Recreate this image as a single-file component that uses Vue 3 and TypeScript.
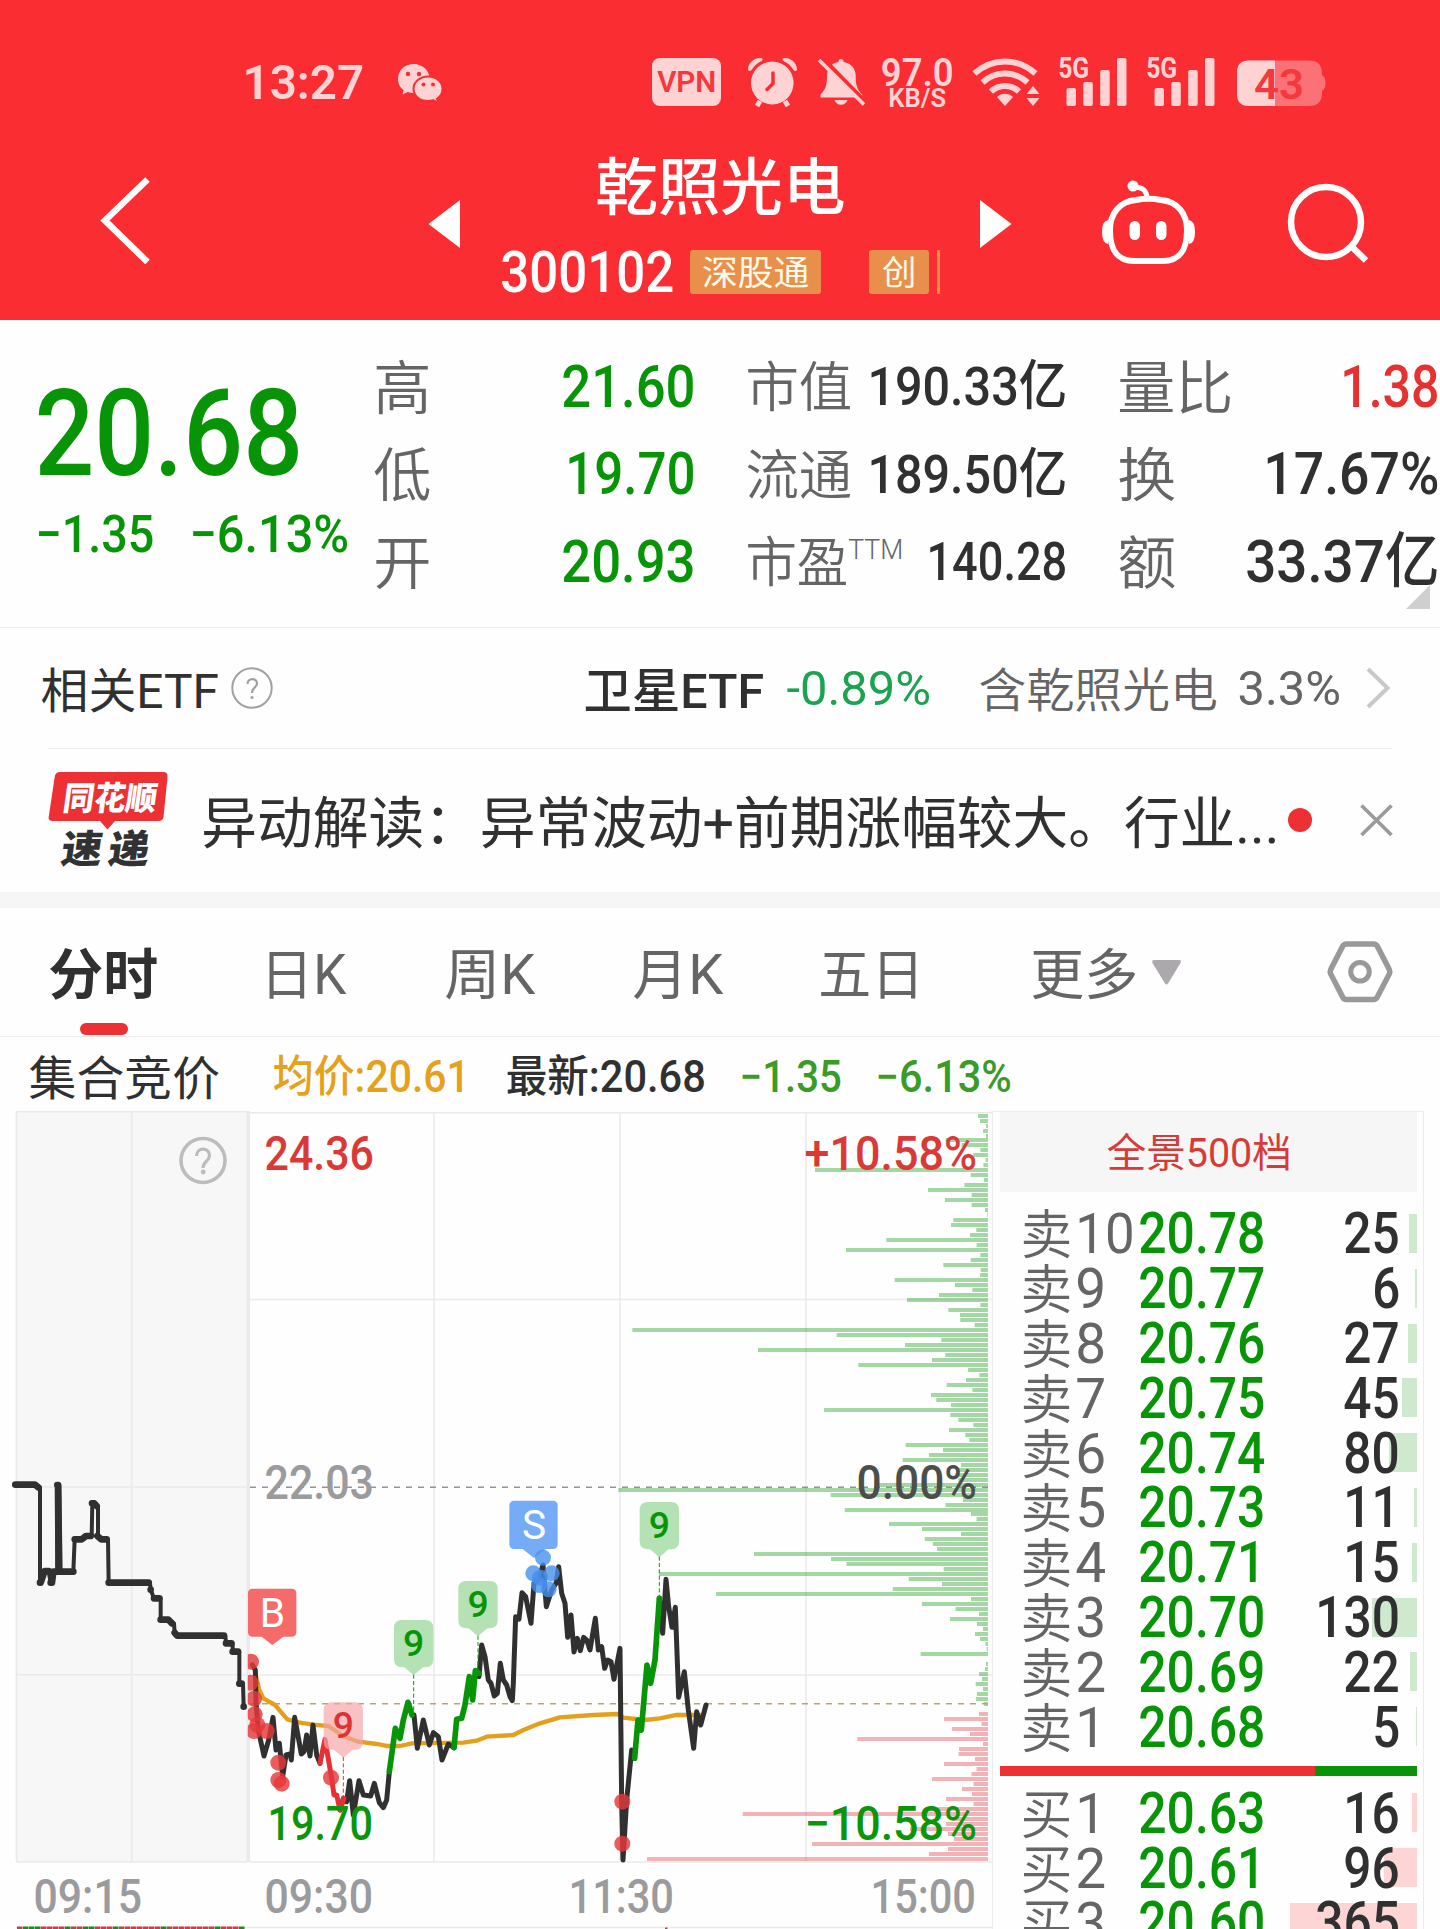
<script setup lang="ts">
import { h, type FunctionalComponent } from 'vue'

interface FitProps {
  t: string
  w: number
  s: number
  h?: number
  wt?: number
}

// A single line of text set to an exact measure.
const Fit: FunctionalComponent<FitProps> = (p) => {
  const height = p.h ?? Math.round(p.s * 1.1)
  const left = p.s * 0.03
  const right = p.s * 0.042
  const drop = /[\u4e00-\u9fff]/.test(p.t) && !/\d/.test(p.t) ? p.s * 0.042 : 0
  return h('svg', { width: p.w, height, class: 'fit' }, [
    h('text', {
      x: -left,
      y: height / 2 + p.s * 0.355 + drop,
      textLength: p.w + left + right,
      lengthAdjust: 'spacingAndGlyphs',
      'font-size': p.s,
      'font-weight': p.wt ?? 500,
    }, p.t),
  ])
}
Fit.props = ['t', 'w', 's', 'h', 'wt']

interface Stat {
  label: string
  lw: number
  ls: number
  value: string
  vw: number
  vs: number
  tone: string
  sup?: string
}
const stats: Stat[][] = [
  [
    { label: '高', lw: 54, ls: 58, value: '21.60', vw: 130, vs: 60, tone: 'green' },
    { label: '低', lw: 54, ls: 58, value: '19.70', vw: 126, vs: 60, tone: 'green' },
    { label: '开', lw: 54, ls: 58, value: '20.93', vw: 130, vs: 60, tone: 'green' },
  ],
  [
    { label: '市值', lw: 103, ls: 54, value: '190.33亿', vw: 196, vs: 54, tone: 'dark' },
    { label: '流通', lw: 103, ls: 54, value: '189.50亿', vw: 196, vs: 54, tone: 'dark' },
    { label: '市盈', lw: 99, ls: 54, value: '140.28', vw: 137, vs: 53, tone: 'dark', sup: 'TTM' },
  ],
  [
    { label: '量比', lw: 112, ls: 58, value: '1.38', vw: 95, vs: 60, tone: 'red' },
    { label: '换', lw: 55, ls: 58, value: '17.67%', vw: 172, vs: 60, tone: 'dark' },
    { label: '额', lw: 55, ls: 58, value: '33.37亿', vw: 190, vs: 60, tone: 'dark' },
  ],
]

const tabs = [
  { t: '分时', w: 106, wt: 700 },
  { t: '日K', w: 82, wt: 400 },
  { t: '周K', w: 87, wt: 400 },
  { t: '月K', w: 87, wt: 400 },
  { t: '五日', w: 102, wt: 400 },
  { t: '更多', w: 104, wt: 400 },
]

interface Level {
  side: string
  n: number
  price: string
  qty: number
  bar: number
}
const sells: Level[] = [
  { side: '卖', n: 10, price: '20.78', qty: 25, bar: 8 },
  { side: '卖', n: 9, price: '20.77', qty: 6, bar: 2 },
  { side: '卖', n: 8, price: '20.76', qty: 27, bar: 9 },
  { side: '卖', n: 7, price: '20.75', qty: 45, bar: 15 },
  { side: '卖', n: 6, price: '20.74', qty: 80, bar: 28 },
  { side: '卖', n: 5, price: '20.73', qty: 11, bar: 3 },
  { side: '卖', n: 4, price: '20.71', qty: 15, bar: 5 },
  { side: '卖', n: 3, price: '20.70', qty: 130, bar: 45 },
  { side: '卖', n: 2, price: '20.69', qty: 22, bar: 7 },
  { side: '卖', n: 1, price: '20.68', qty: 5, bar: 1 },
]
const buys: Level[] = [
  { side: '买', n: 1, price: '20.63', qty: 16, bar: 5 },
  { side: '买', n: 2, price: '20.61', qty: 96, bar: 33 },
  { side: '买', n: 3, price: '20.60', qty: 365, bar: 127 },
]
const digitWidth = (n: number): number => String(n).length * 28.4 - 4.5

// Left edge of every price-volume bar, top of the chart to the bottom.
const upper = [
  1134, 1140, 1158, 1149, 1158, 1037, 1085, 1141, 1120, 1157, 1150, 645, 1112, 1152, 1093, 984, 1115, 1035, 1115, 1155,
  1162, 1060, 1053, 1129, 1110, 859, 1130, 738, 1141, 1112, 1030, 1142, 1140, 884, 1065, 1117, 1017, 921, 1141, 1045,
  1080, 1081, 1124, 97, 710, 1024, 915, 474, 1036, 996, 775, 1104, 1138, 1098, 1040, 1117, 993, 1009, 1053, 672,
  1051, 1075, 1120, 1047, 1096, 1108, 917, 1029, 987, 908, 1083, 1070, 1065, 1075, 833, 55, 692,
].map((v) => 600 + v / 3)
const lower = [
  963, 945.4, 844.8, 971, 976.6, 889, 922, 961, 924.8, 932.8, 937, 754, 831, 846.5, 943.7, 659, 908.8, 942, 892.8, 716,
  971, 921.8, 955.5, 979, 950, 977, 983, 975, 980, 985.5, 986.7, 920.6, 988, 986, 985, 979, 982, 975.7, 983, 977, 976,
  984, 988, 979, 944, 981.6, 952, 970, 857.4, 983, 959, 958.5, 975, 944, 976.5, 971.5, 932, 973.6, 962, 972, 946,
  973.6, 938, 742.7, 952, 946, 910, 948, 954, 812, 948, 929, 647,
]
const bars = [...upper, ...lower].map((x, i) => ({
  x,
  w: 988 - x,
  y: (i < 5 ? 1114 : i < 80 ? 1113 : 1112) + 5 * i,
  fill: i < 119 ? 'rgba(8,150,12,.37)' : 'rgba(226,50,56,.37)',
}))

const nines = [
  { x: 1241, y: 510, to: 795, c: 'g' },
  { x: 1434, y: 393, to: 660, c: 'g' },
  { x: 1978, y: 156, to: 445, c: 'g' },
  { x: 1030, y: 757, to: 1045, c: 'r' },
]
const redDots = [
  [753, 635], [752, 698], [762, 746], [764, 793], [772, 825], [762, 843], [800, 843],
  [835, 938], [835, 990], [845, 1001], [993, 983], [1867, 1055], [1867, 1181],
]
const blueDots = [[1629, 323], [1600, 370], [1620, 383], [1655, 370], [1617, 405], [1646, 418]]

const labels = [
  { t: '24.36', x: 266, w: 106, y: 1170, c: '#d93a37' },
  { t: '22.03', x: 266, w: 106, y: 1499, c: '#9b9a9c' },
  { t: '19.70', x: 269, w: 102, y: 1840, c: '#0a960a' },
  { t: '+10.58%', x: 806, w: 169, y: 1170, c: '#d93a37' },
  { t: '0.00%', x: 858, w: 117, y: 1499, c: '#4b4e4a' },
  { t: '−10.58%', x: 806, w: 169, y: 1840, c: '#0a960a' },
  { t: '09:15', x: 35, w: 105, y: 1913, c: '#9b9a9c' },
  { t: '09:30', x: 266, w: 105, y: 1913, c: '#9b9a9c' },
  { t: '11:30', x: 570, w: 102, y: 1913, c: '#9b9a9c' },
  { t: '15:00', x: 872, w: 102, y: 1913, c: '#9b9a9c' },
]
const ticks = Array.from({ length: 38 }, (_, i) => ({
  x: 17 + i * 6,
  c: [1, 2, 3, 8, 11, 12, 16, 24, 33, 37].includes(i) ? '#0a960a' : '#d9383a',
}))
</script>

<template>
  <div class="screen">
    <header class="head">
      <div class="status">
        <Fit t="13:27" :w="118" :s="49" :wt="600" />
        <svg width="46" height="60" viewBox="397 52 46 60">
          <path d="M413.500 64c-9 0-15.500 6.500-15.500 15 0 5 2.300 8.500 5.500 11l-1 4.500 5-2.500c2 .7 4 1 6 1 9 0 16-6.500 16-14.500s-7-14.500-16-14.500z" fill="#ffd3d4" />
          <path d="M428 76.500c-8 0-14.500 5.500-14.500 12.300s6 12.200 14.500 12.200c2 0 3.500-.3 5-.8l5.500 2.600-1.500-4c3.500-2.300 5.500-6 5.500-10 0-7-6.500-12.300-14.500-12.300z" fill="#ffd3d4" stroke="#f92d32" stroke-width="2" />
          <g fill="#f92d32"><circle cx="408" cy="74" r="2.200" /><circle cx="419" cy="74" r="2.200" /><circle cx="423.500" cy="84.500" r="2" /><circle cx="433" cy="84.500" r="2" /></g>
        </svg>
        <div class="vpn"><Fit t="VPN" :w="57" :s="29" :wt="600" /></div>
        <svg width="52" height="60" viewBox="746 52 52 60" fill="#ffd3d4">
          <ellipse cx="772.300" cy="83" rx="21.300" ry="21.500" />
          <path d="M748 69.500c0-7 7-12.500 13-11.500 2 .5 2 2 .5 3-4.500 2-7.500 5-10 9-1.500 1.500-3.500 1-3.500-.5zM797 69.500c0-7-7-12.500-13-11.500-2 .5-2 2-.5 3 4.500 2 7.500 5 10 9 1.500 1.500 3.500 1 3.500-.5z" />
          <path d="M760 101l-3 5M785 101l3 5" stroke="#ffd3d4" stroke-width="5" />
          <path d="M773 73v10.500l-6 6" fill="none" stroke="#f92d32" stroke-width="3.500" stroke-linecap="round" />
        </svg>
        <svg width="52" height="60" viewBox="816 52 52 60" fill="#ffd3d4">
          <path d="M841 59c2 0 2.500 1.500 2.700 3 8 1.500 12 7 12 14.500 0 9 1.500 13 6.500 18v3H820.500v-3c5-5 6.500-9 6.500-18 0-7.500 3.500-13 11.300-14.500.2-1.500.7-3 2.700-3zM834.500 100h13c-1 3-3.500 4.700-6.500 4.700s-5.500-1.700-6.500-4.700z" />
          <path d="M822 57.500l45 46" stroke="#f92d32" stroke-width="4" />
          <path d="M819 60l45 44.500" stroke="#ffd3d4" stroke-width="3.600" />
        </svg>
        <div class="rate">
          <Fit t="97.0" :w="70" :s="38" :h="30" :wt="600" />
          <Fit t="KB/S" :w="56" :s="25" :h="20" :wt="600" />
        </div>
        <svg width="70" height="60" viewBox="971 52 70 60" fill="none" stroke="#ffd3d4" stroke-width="6">
          <path d="M974.500 73.500c18-16 43-16 61 0" /><path d="M982.500 82.500c13-12 32-12 45 0" /><path d="M991 91.500c8-7.500 20-7.500 28 0" />
          <path d="M997 97c4-4.500 12-4.500 16 0l-8 9z" fill="#ffd3d4" stroke="none" />
          <path d="M1026.500 94l6.500-8 6.500 8zM1026.500 98h13l-6.500 8z" fill="#ffd3d4" stroke="none" />
        </svg>
        <div v-for="n in 2" :key="n" class="signal">
          <Fit t="5G" :w="29" :s="29" :h="22" :wt="700" />
          <svg width="61" height="50" viewBox="1066 57 61 50" fill="#ffd3d4" class="sigbars">
            <rect x="1066.500" y="88" width="9.500" height="18" rx="2" /><rect x="1083.300" y="82" width="9.500" height="24" rx="2" />
            <rect x="1100.200" y="70" width="9.500" height="36" rx="2" /><rect x="1117" y="58" width="9.500" height="48" rx="2" />
          </svg>
        </div>
        <svg width="90" height="60" viewBox="1237 52 90 60">
          <path d="M1249 60.500h60q13 0 13 13v1.500q3.500 2 3.500 8t-3.500 8v2q0 13-13 13h-60q-12 0-12-12v-21.500q0-12 12-12z" fill="#fb7175" />
          <path d="M1275 60.500h-26q-12 0-12 12v21.500q0 12 12 12h26z" fill="#ffd3d4" />
          <text x="1254" y="99" font-size="43" font-weight="600" textLength="50" lengthAdjust="spacingAndGlyphs" fill="#f4383d">43</text>
        </svg>
      </div>
      <div class="nav">
        <svg width="327" height="208" viewBox="101 112 327 208"><path d="M147.500 179.500L105 220.500l42.500 41.500" fill="none" stroke="#fff" stroke-width="6.500" /></svg>
        <svg width="74" height="208" viewBox="428 112 74 208"><path d="M428.500 224L460 200v48z" fill="#fff" /></svg>
        <div class="name">
          <Fit t="乾照光电" :w="246" :s="62" :h="67" :wt="500" class="title" />
          <div class="code">
            <Fit t="300102" :w="170" :s="57" :h="44" :wt="500" />
            <span class="badge wide"><Fit t="深股通" :w="105" :s="34" :h="44" :wt="400" /></span>
            <span class="badge"><Fit t="创" :w="32" :s="34" :h="44" :wt="400" /></span>
            <i class="sliver" />
          </div>
        </div>
        <svg width="122" height="208" viewBox="980 112 122 208"><path d="M1011.500 224L980 200v48z" fill="#fff" /></svg>
        <svg width="185" height="208" viewBox="1102 112 185 208" fill="none" stroke="#fff" stroke-width="6">
          <path d="M1136 200c8-1.500 17-1.500 25 0 17 1.500 26 14 26 30 0 22-8 31-25 31h-27c-17 0-25-9-25-31 0-16 9-28.500 26-30z" />
          <path d="M1147 199c0-7-3-12-13-12" stroke-width="5" /><circle cx="1133" cy="186" r="5.500" fill="#fff" stroke="none" />
          <path d="M1108 220q-6 1-6 12t6 12zM1189 220q6 1 6 12t-6 12z" fill="#fff" stroke="none" />
          <g fill="#fff" stroke="none"><rect x="1129.500" y="221" width="10.500" height="19" rx="5.200" /><rect x="1156" y="221" width="10.500" height="19" rx="5.200" /></g>
        </svg>
        <svg width="90" height="208" viewBox="1287 112 90 208" fill="none" stroke="#fff" stroke-width="6.500"><circle cx="1326" cy="222" r="35" /><path d="M1351.500 246.500l14.500 14" /></svg>
      </div>
    </header>

    <section class="quote">
      <div class="last">
        <Fit t="20.68" :w="260" :s="120" :h="120" :wt="500" class="green" />
        <div class="chg">
          <Fit t="−1.35" :w="115" :s="52" :h="60" class="green" />
          <Fit t="−6.13%" :w="156" :s="52" :h="60" class="green" />
        </div>
      </div>
      <div v-for="(col, c) in stats" :key="c" class="statcol">
        <div v-for="r in col" :key="r.label" class="stat">
          <span class="lab"><Fit :t="r.label" :w="r.lw" :s="r.ls" :wt="350" class="grey" /><Fit v-if="r.sup" :t="r.sup" :w="53" :s="28" :wt="300" class="grey sup" /></span>
          <Fit :t="r.value" :w="r.vw" :s="r.vs" :class="r.tone" />
        </div>
      </div>
      <svg class="corner" width="24" height="24"><path d="M24 0v24H0z" fill="#cfcfcf" /></svg>
    </section>

    <section class="etf">
      <Fit t="相关ETF" :w="175" :s="48" :wt="400" class="dark" />
      <svg width="42" height="42" fill="none" stroke="#a0a0a0"><circle cx="21" cy="21" r="19.700" stroke-width="2" /><path d="M16.500 17c0-6.500 9.500-6.500 9.500-.5 0 4-5 4-5 9.500" stroke-width="2.200" /><circle cx="21" cy="30.500" r="1.600" fill="#a0a0a0" stroke="none" /></svg>
      <Fit t="卫星ETF" :w="177" :s="48" :wt="500" class="dark" />
      <Fit t="-0.89%" :w="141" :s="49" :wt="400" class="mint" />
      <Fit t="含乾照光电" :w="236" :s="47" :wt="350" class="grey" />
      <Fit t="3.3%" :w="100" :s="49" :wt="400" class="grey" />
      <svg width="26" height="44" fill="none"><path d="M2 3l19.500 19L2 41" stroke="#c9c9c9" stroke-width="4" /></svg>
    </section>

    <section class="news">
      <svg width="154" height="143" viewBox="49 749 154 143">
        <path d="M60 772h103q5 0 4.500 5l-4 40q-.6 4-5 4H115l-7.500 8.500L100 821H53q-5 0-4.300-4l6-40q.7-5 5.300-5z" fill="#ed3033" />
        <g font-weight="900" transform="skewX(-8)"><text x="175.500" y="810" font-size="33" textLength="94" lengthAdjust="spacingAndGlyphs" fill="#fff">同花顺</text>
          <text x="181" y="863.500" font-size="39" textLength="41" lengthAdjust="spacingAndGlyphs" fill="#323232">速</text>
          <text x="228" y="863.500" font-size="39" textLength="41" lengthAdjust="spacingAndGlyphs" fill="#323232">递</text></g>
      </svg>
      <Fit t="异动解读：异常波动+前期涨幅较大。行业..." :w="1074" :s="56" :wt="400" class="dark headline" />
      <svg width="117" height="143" viewBox="1275 749 117 143"><circle cx="1300" cy="820" r="12" fill="#ed3033" /><path d="M1361.500 805.500l30 29.500M1391.500 805.500l-30 29.500" stroke="#9a9a9a" stroke-width="3.600" /></svg>
    </section>
    <div class="band" />

    <nav class="tabs">
      <div v-for="(t, i) in tabs" :key="t.t" class="tab" :class="{ on: i === 0 }">
        <Fit :t="t.t" :w="t.w" :s="55" :h="64" :wt="t.wt" :class="i ? 'grey' : 'dark'" />
        <svg v-if="i === 5" class="caret" width="29" height="25"><path d="M2 0h25q3 0 1.500 3L16 23.500q-1.500 2-3 0L.5 3Q-.5 0 2 0z" fill="#aba9ab" /></svg>
      </div>
      <svg width="66" height="66" viewBox="1327 939 66 66" fill="none" stroke="#999" stroke-width="5.500"><path d="M1346.500 944h27q2.500 0 3.800 2.200l12 23.300q1 2.200 0 4.400l-12 23.200q-1.300 2.400-3.800 2.400h-27q-2.500 0-3.800-2.400l-12-23.200q-1-2.200 0-4.400l12-23.300q1.300-2.200 3.800-2.200z" /><circle cx="1360" cy="971.800" r="9.300" stroke-width="5" /></svg>
    </nav>

    <div class="info">
      <Fit t="集合竞价" :w="188" :s="47" :wt="400" class="dark" />
      <Fit t="均价:20.61" :w="194" :s="44" class="gold" />
      <Fit t="最新:20.68" :w="197" :s="44" class="dark" />
      <Fit t="−1.35" :w="99" :s="44" class="leaf" />
      <Fit t="−6.13%" :w="133" :s="44" class="leaf" />
    </div>

    <main class="market">
      <svg class="chart" width="992" height="818" viewBox="0 1111 992 818">
        <rect x="16.500" y="1111" width="232" height="751" fill="#f7f7f7" />
        <g fill="none" stroke="#ece9eb" stroke-width="1.600">
          <path d="M16.500 1862V1111.700H249M131.700 1111V1862M16.500 1487H247M16.500 1674.700H247M16.500 1862H247" />
          <path d="M248.300 1111V1862" stroke-width="3.500" />
          <path d="M250 1112.800H992M250 1299.500H992M250 1675H992M250 1862H992M434 1112V1862M620 1112V1862M806 1112V1862M16 1927.500H992" />
        </g>
        <rect v-for="(b, i) in bars" :key="i" :x="b.x" :y="b.y" :width="b.w" height="4" :fill="b.fill" />
        <path d="M250 1487.300H988" stroke="#949494" stroke-width="1.600" stroke-dasharray="6 6" />
        <path d="M250 1703.700H988" stroke="#b7a575" stroke-width="1.600" stroke-dasharray="6 6" />
        <g fill="none" stroke="#bcbcbc" stroke-width="3.600"><circle cx="203" cy="1160.500" r="22" /><path d="M196.500 1156c0-9 13-9 13-.5 0 6-6.500 6-6.500 12.500" stroke-width="3.200" /><circle cx="203.200" cy="1172" r="2.400" fill="#bcbcbc" stroke="none" /></g>

        <g transform="translate(0 1450) scale(.33333)" fill="none" stroke-linejoin="round" stroke-linecap="round">
          <g stroke="#303030">
            <path stroke-width="12" d="M46 104L105 104 120 112V398L134 363 146 365 152 398 160 365 172 363V104H178L182 365H220L224 268H245L258 258H275L277 160H283L294 170V258L304 268H324L326 398H450L452 419 462 445H482V509H505L522 520 524 548 532 557H676L678 580H698V605H718V701H729L731 770" />
            <path stroke-width="20" d="M46 104H105L115 112M120 398V398M122 398L134 363H146M152 398H156L160 365H220M172 105H174L176 360M224 268H245L258 258H272M276 160H283L290 168M292 258L304 268H320M326 398H446M452 419V419M462 445H478M482 509H505L516 520M524 548L532 557H672M678 580H694M698 605H714M718 701H725M731 770V770" />
          </g>
          <path stroke="#e2a01c" stroke-width="13" d="M765 665L778 720 790 745 825 765 862 808 900 818 940 824 985 828 1030 858 1075 875 1130 882 1160 888H1200L1235 880 1390 878 1430 872 1460 860 1540 855 1570 840 1620 820 1680 802 1780 795 1855 792 1870 803 1935 810 1980 805 2030 795H2100" />
          <path stroke="#303030" stroke-width="15" d="M757 645L766 660 768 760 775 840 792 918 806 870 819 802 828 900 838 880 848 980 858 915 870 912 874 930 884 802 904 912 912 905 920 855 930 918 939 825 950 915 960 940M1020 1080L1030 1045 1040 1055 1049 992 1060 1095 1077 992 1090 1035 1112 1038 1123 1000 1138 1058 1150 1073 1160 1050 1168 965M1242 795L1252 895 1270 810 1288 885 1300 848 1315 860 1326 930 1345 882 1362 893M1437 680L1445 585 1455 620 1465 690 1473 700 1483 738 1492 730 1501 640 1510 690 1520 705 1530 740 1537 752 1540 700 1547 500 1557 507 1566 428 1577 440 1593 520 1602 400 1615 390 1629 345 1639 470 1655 420 1668 400 1676 350 1685 430 1695 460 1703 562 1713 495 1722 606 1732 565 1741 602 1751 562 1760 570 1770 600 1786 505 1795 600 1805 590 1814 655 1823 630 1833 635 1842 688 1860 595 1865 1050 1869 1230 1880 1050 1895 900 1904 925M1978 445L1988 550 1998 388 2006 470 2016 532 2026 472 2036 742 2053 665 2065 780 2081 895 2090 785 2102 825 2118 765" />
          <path stroke="#e83034" stroke-width="15" d="M960 940L975 868 995 985 1002 1035 1010 1035 1020 1080 1032 1045" />
          <path stroke="#079507" stroke-width="17" d="M1168 965L1186 835 1200 865 1210 810 1224 757 1236 795M1362 893L1370 808 1385 805 1395 765 1408 680 1418 750 1426 662 1437 670M1904 925L1914 810 1924 840 1941 645 1952 700 1965 630 1978 445" />
        </g>
        <clipPath id="session"><rect x="247.800" y="1112" width="744" height="760" /></clipPath>
        <g clip-path="url(#session)">
          <g transform="translate(0 1450) scale(.33333)">
            <circle v-for="(d, i) in redDots" :key="'r' + i" :cx="d[0]" :cy="d[1]" r="24" fill="#e5383b" fill-opacity=".82" />
            <path d="M1565 295L1602 324 1640 295z" fill="#75acf5" />
            <circle v-for="(d, i) in blueDots" :key="'b' + i" :cx="d[0]" :cy="d[1]" r="24" fill="#4790ee" fill-opacity=".8" />
            <path d="M758 416H875Q889 416 889 430V546Q889 560 875 560H850L817 585 785 560H758Q744 560 744 546V430Q744 416 758 416z" fill="#f46b69" />
            <rect x="1528" y="152" width="145" height="145" rx="14" fill="#75acf5" />
            <text x="817" y="530" font-size="122" text-anchor="middle" fill="#fff">B</text>
            <text x="1602" y="267" font-size="122" text-anchor="middle" fill="#fff">S</text>
            <g v-for="(n, i) in nines" :key="'n' + i" :transform="`translate(${n.x} ${n.y})`">
              <path d="M-35 0H35Q59 0 59 24V118Q59 142 35 142H28L0 166-28 142H-35Q-59 142-59 118V24Q-59 0-35 0z" :fill="n.c === 'g' ? '#a8dda9' : '#f5a3a6'" :fill-opacity="n.c === 'g' ? .86 : .68" />
              <path :d="`M0 164V${n.to - n.y}`" :stroke="n.c === 'g' ? '#0a960a' : '#d9383a'" stroke-width="3" stroke-dasharray="12 7" />
              <text x="0" y="107" font-size="112" font-weight="500" text-anchor="middle" :fill="n.c === 'g' ? '#079507' : '#e03235'">9</text>
            </g>
          </g>
        </g>
        <text v-for="l in labels" :key="l.t + l.x" :x="l.x - 1.5" :y="l.y" :textLength="l.w + 3.500" lengthAdjust="spacingAndGlyphs" font-size="48" font-weight="500" :fill="l.c">{{ l.t }}</text>
        <rect v-for="t in ticks" :key="t.x" :x="t.x" y="1926.500" width="5.500" height="3" :fill="t.c" />
        <rect x="665" y="1927.500" width="2.500" height="2" fill="#d9383a" />
      </svg>

      <aside class="book">
        <div class="deep"><Fit t="全景500档" :w="182" :s="40" :wt="400" /></div>
        <div class="sells">
          <div v-for="l in sells" :key="l.n" class="level">
            <span class="side"><Fit :t="l.side" :w="48" :s="53" :h="54" :wt="350" class="grey" /><Fit :t="String(l.n)" :w="digitWidth(l.n) + 3" :s="56" :h="54" :wt="400" class="grey" /></span>
            <Fit :t="l.price" :w="123" :s="57" :h="54" :wt="500" class="green" />
            <span class="qty"><Fit :t="String(l.qty)" :w="digitWidth(l.qty)" :s="57" :h="54" class="dark" /></span>
            <i class="depth" :style="{ width: l.bar + 'px' }" />
          </div>
        </div>
        <div class="ratio"><i /></div>
        <div class="buys">
          <div v-for="l in buys" :key="l.n" class="level">
            <span class="side"><Fit :t="l.side" :w="48" :s="53" :h="54" :wt="350" class="grey" /><Fit :t="String(l.n)" :w="digitWidth(l.n) + 3" :s="56" :h="54" :wt="400" class="grey" /></span>
            <Fit :t="l.price" :w="123" :s="57" :h="54" :wt="500" class="green" />
            <span class="qty"><Fit :t="String(l.qty)" :w="digitWidth(l.qty)" :s="57" :h="54" class="dark" /></span>
            <i class="depth" :style="{ width: l.bar + 'px' }" />
          </div>
        </div>
      </aside>
    </main>
  </div>
</template>

<style>
body { background: #fefefe; }
svg { display: block; flex: none; overflow: visible; }
svg text { font-family: Roboto, "Noto Sans CJK SC", sans-serif; }
.fit { fill: currentColor; }
</style>

<style scoped>
.screen { width: 1440px; height: 1929px; overflow: hidden; background: #fefefe; box-sizing: border-box; }
.screen * { box-sizing: border-box; }
.green { color: #079507; }
.dark { color: #303030; }
.red { color: #e53230; }
.grey { color: #656565; }
.mint { color: #1ba352; }
.gold { color: #e6a11b; }
.leaf { color: #3a9b26; }

.head { height: 320px; padding-top: 52px; background: #f92d32; color: #fff; }
.status { height: 60px; padding-left: 244px; display: grid; align-items: center; color: #ffd3d4;
  grid-template-columns: 153px 255px 94px 70px 65px 90px 88px 88px 90px 90px; }
.vpn { width: 69px; height: 48px; border-radius: 8px; background: #ffd3d4; color: #f4383d; display: grid; place-items: center; }
.rate { display: flex; flex-direction: column; align-items: center; width: 72px; }
.rate .fit + .fit { margin-top: 1px; }
.signal { position: relative; height: 50px; }
.sigbars { position: absolute; left: 7px; top: 0; }
.nav { height: 208px; padding-left: 101px; display: flex; }
.name { width: 478px; padding-top: 40px; }
.title { margin-left: 95px; }
.code { height: 44px; margin-top: 31px; display: flex; align-items: center; }
.badge { height: 44px; width: 60px; margin-left: 48px; border-radius: 3px; background: #e88f4b; color: #fffbe6; display: grid; place-items: center; }
.badge.wide { width: 131px; margin-left: 18px; }
.sliver { width: 3px; height: 44px; margin-left: 8px; background: #e88f4b; }

.quote { position: relative; height: 308px; padding-left: 38px; display: flex; border-bottom: 1.500px solid #eee; }
.last { width: 337px; flex: none; padding-top: 52px; }
.chg { display: flex; gap: 39px; margin: 12px 0 0 -1px; }
.statcol { width: 318px; margin-right: 54px; padding-top: 22px; flex: none; }
.stat { height: 87.500px; display: flex; align-items: center; justify-content: space-between; }
.lab { display: flex; align-items: center; }
.sup { margin: 0 0 22px 3px; }
.corner { position: absolute; left: 1406px; top: 265px; }

.etf { height: 120px; padding-left: 42px; display: grid; align-items: center; grid-template-columns: 189px 354px 203px 192px 259px 127px 40px; }
.news { height: 144px; margin: 0 48px; padding-left: 1px; border-top: 1px solid #eee; display: flex; align-items: center; }
.headline { margin-right: -2px; }
.band { height: 16px; background: #f6f6f6; }

.tabs { height: 129px; padding-left: 50px; display: grid; align-items: center; border-bottom: 1px solid #ebebeb;
  grid-template-columns: 212px 184px 188px 186px 212px 295px 66px; }
.tab { position: relative; display: flex; align-items: center; }
.tab.on::after { content: ""; position: absolute; left: 30px; top: 83px; width: 48px; height: 12px; border-radius: 6px; background: #ed3033; }
.caret { margin-left: 16px; }
.info { height: 74px; padding: 4px 0 0 30px; display: grid; align-items: center; grid-template-columns: 244px 233px 234px 136px 133px; }

.market { display: flex; height: 818px; }
.book { width: 432px; height: 818px; border: 1.500px solid #ebebeb; border-bottom: 0; padding: 0 6px 0 7px; }
.deep { height: 80px; background: #f6f6f6; color: #d63b38; display: grid; place-items: center; padding: 2px 20px 0 0; }
.sells { padding-top: 14px; }
.buys { padding-top: 9px; }
.level { position: relative; height: 54.800px; display: flex; align-items: center; padding-left: 22px; }
.side { width: 118px; flex: none; display: flex; gap: 7px; }
.qty { width: 134.500px; display: flex; justify-content: flex-end; position: relative; z-index: 1; }
.depth { position: absolute; right: 0; top: 8px; height: 39px; background: #cfe9cf; }
.buys .depth { background: #fdd5d5; }
.ratio { height: 10.500px; margin-top: 12px; background: #079507; }
.ratio i { display: block; width: 75.500%; height: 100%; background: #ed3033; }
</style>
